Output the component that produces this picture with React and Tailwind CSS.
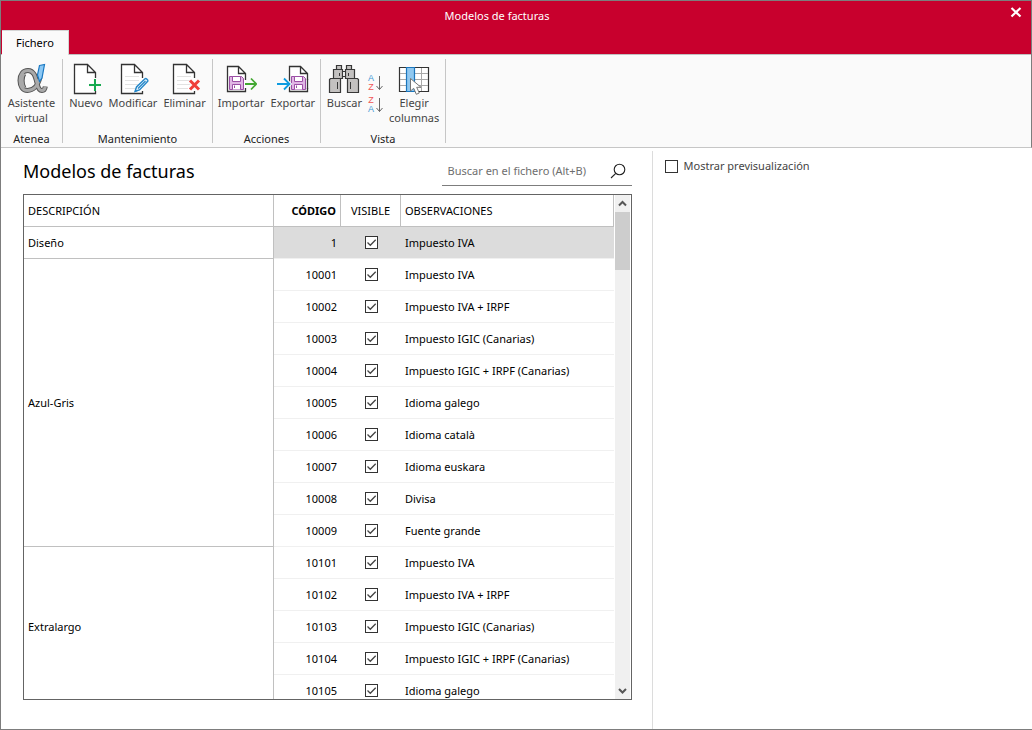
import React, { useState } from "react";

const GROUPS = [
  { name: "Diseño", rows: [["1", "Impuesto IVA"]] },
  {
    name: "Azul-Gris",
    rows: [
      ["10001", "Impuesto IVA"],
      ["10002", "Impuesto IVA + IRPF"],
      ["10003", "Impuesto IGIC (Canarias)"],
      ["10004", "Impuesto IGIC + IRPF (Canarias)"],
      ["10005", "Idioma galego"],
      ["10006", "Idioma català"],
      ["10007", "Idioma euskara"],
      ["10008", "Divisa"],
      ["10009", "Fuente grande"],
    ],
  },
  {
    name: "Extralargo",
    rows: [
      ["10101", "Impuesto IVA"],
      ["10102", "Impuesto IVA + IRPF"],
      ["10103", "Impuesto IGIC (Canarias)"],
      ["10104", "Impuesto IGIC + IRPF (Canarias)"],
      ["10105", "Idioma galego"],
    ],
  },
];

function Icon({ children, viewBox = "0 0 32 32" }) {
  return (
    <svg viewBox={viewBox} className="h-8 w-8 shrink-0" fill="none" aria-hidden="true">
      {children}
    </svg>
  );
}

function AlphaIcon() {
  const d = "M24 14C22 23 17 27.500 11.500 27.500C6.500 27.500 4 23 4 17.500C4 11.500 7 7.500 12 7.500C18 7.500 19.500 14 21 20C22 25 23.500 27.500 26 27.500C28 27.500 29 26 29.300 23.500";
  return (
    <Icon>
      <path d={d} stroke="#555" strokeWidth="5" />
      <path d="M8 10.500C5.500 14 5.500 21 8 25" stroke="#555" strokeWidth="5" />
      <path d={d} stroke="#a9a9a9" strokeWidth="3" />
      <path d="M8 10.500C5.500 14 5.500 21 8 25" stroke="#a9a9a9" strokeWidth="3" />
      <path d="M23.500 2.500L28.500 1.500L26 15L23.500 18.500L21.500 12Z" fill="#8cc8f4" stroke="#1a78c2" strokeWidth="1.200" />
    </Icon>
  );
}

function Page({ lines }) {
  return (
    <>
      <path d="M22.500 15V9.500L14.500 1.500H1.500V30.500H22.500V28" fill="#fff" />
      <path d="M22.500 15V9.500L14.500 1.500H1.500V30.500H22.500V28M14.500 1.500V9.500H22.500" stroke="#333" strokeWidth="1.300" />
      {lines && <path d="M5 13.500H19M5 17.500H19M5 21.500H18M5 25.500H16" stroke="#e2e2e2" />}
    </>
  );
}

function NewIcon() {
  return (
    <Icon viewBox="-3 0 32 32">
      <Page />
      <path d="M16 22H28M22 16V28" stroke="#fafafa" strokeWidth="4" />
      <path d="M16 22H28M22 16V28" stroke="#16a94f" strokeWidth="2" />
    </Icon>
  );
}

function EditIcon() {
  return (
    <Icon viewBox="-3 0 32 32">
      <Page lines />
      <path d="M15 28.500L16.500 24L25 15.800C26 15 28.500 17 27.700 18.300L19.500 27Z" fill="#e6f3fc" stroke="#2587c8" strokeWidth="1.400" />
      <path d="M18 25.500L25.500 18M15 28.500L17.500 27.500" stroke="#2587c8" strokeWidth="1.200" />
    </Icon>
  );
}

function DeleteIcon() {
  return (
    <Icon viewBox="-3 0 32 32">
      <Page lines />
      <path d="M18 17.500L27 26.500M27 17.500L18 26.500" stroke="#fafafa" strokeWidth="5" />
      <path d="M18 17.500L27 26.500M27 17.500L18 26.500" stroke="#ef3e3a" strokeWidth="3" />
    </Icon>
  );
}

function DiskPage() {
  return (
    <>
      <path d="M20.500 17V10.500L13.500 3.500H2.500V28.500H20.500V25" fill="#fff" />
      <path d="M20.500 17V10.500L13.500 3.500H2.500V28.500H20.500V25M13.500 3.500V10.500H20.500" stroke="#333" strokeWidth="1.300" />
      <path d="M4.500 13.500H16.500L18.500 15.500V26.500H4.500Z" fill="#e0b6e4" stroke="#9b4fa5" />
      <path d="M7.500 13.500H15.500V18.500H7.500Z" fill="#fff" stroke="#9b4fa5" />
      <path d="M7.500 26.500V21.500H15.500V26.500" fill="#fff" stroke="#9b4fa5" />
      <path d="M9.500 22.500V25" stroke="#9b4fa5" />
    </>
  );
}

function ImportIcon() {
  return (
    <Icon>
      <DiskPage />
      <path d="M20 21H31M26 15.500L31.300 21L26 26.500" stroke="#43a832" strokeWidth="1.800" />
    </Icon>
  );
}

function ExportIcon() {
  return (
    <Icon>
      <g transform="translate(10 0)">
        <DiskPage />
        <path d="M20.500 16V26" stroke="#333" strokeWidth="1.300" />
      </g>
      <path d="M0 21H12M7 15.500L12.500 21L7 26.500" stroke="#fafafa" strokeWidth="4" />
      <path d="M0 21H12.500M7 15.500L12.500 21L7 26.500" stroke="#0d9be0" strokeWidth="1.800" />
    </Icon>
  );
}

function BinocularsIcon() {
  return (
    <Icon>
      <g fill="#c3c1c0" stroke="#383838" strokeWidth="1.200">
        <path d="M13.500 8.500H18.500V13.500H13.500Z" fill="#fff" />
        <path d="M8.500 2.500H13.500V6.500H8.500ZM18.500 2.500H23.500V6.500H18.500Z" />
        <path d="M5.500 6.500H14.500V15.500H5.500ZM17.500 6.500H26.500V15.500H17.500Z" />
        <path d="M2.500 15.500H12.500V29.500H1.500V16.500ZM19.500 15.500H29.500L30.500 16.500V29.500H19.500Z" />
      </g>
      <path d="M9.500 19V26M22.500 19V26M11.500 10V13M20.500 10V13" stroke="#383838" />
    </Icon>
  );
}

function ColumnsIcon() {
  return (
    <Icon>
      <path d="M1.500 4.500H30.500V28.500H1.500Z" fill="#fff" stroke="#333" strokeWidth="1.200" />
      <path d="M2 10.500H30M2 16.500H30M2 22.500H30M23.500 5V28" stroke="#a9a9a9" />
      <path d="M8.500 4.500H16.500V28.500H8.500Z" fill="#90c8f0" stroke="#1b76bd" strokeWidth="1.200" />
      <path d="M12.500 15.500V28L15.700 25.300L18.300 31.300L21.300 30L18.700 24.300H23Z" fill="#fff" stroke="#777" />
    </Icon>
  );
}

function RibbonButton({ icon, children }) {
  return (
    <button type="button" className="flex flex-col items-center whitespace-nowrap text-center text-[11px] leading-[15px] text-[#444]">
      {icon}
      <span>{children}</span>
    </button>
  );
}

function RibbonGroup({ title, width, children }) {
  return (
    <section aria-label={title} className={`flex shrink-0 flex-col border-r border-[#c6c6c6] ${width}`}>
      <div className="flex flex-1 items-start justify-center gap-1.5 pt-1">{children}</div>
      <h2 className="mb-[-3px] text-center text-[11px] leading-[15px] text-[#222]">{title}</h2>
    </section>
  );
}

function SortButton({ letters, label }) {
  return (
    <button type="button" aria-label={label} className="flex items-center gap-0.5">
      <span className="flex flex-col font-['Liberation_Sans',sans-serif] text-[9px] leading-[9px]">
        {letters.map((l) => (
          <span key={l} className={l === "A" ? "text-[#3f97d4]" : "text-[#f05555]"}>
            {l}
          </span>
        ))}
      </span>
      <svg viewBox="0 0 7 16" className="h-4 w-[7px]" fill="none" stroke="#666" aria-hidden="true">
        <path d="M3.500 1V14.500M.5 11L3.500 14.500L6.500 11" />
      </svg>
    </button>
  );
}

function VisibleBox({ code }) {
  return (
    <label className="relative mx-auto block h-[13px] w-[13px]">
      <input
        type="checkbox"
        defaultChecked
        aria-label={`Visible ${code}`}
        className="peer block h-[13px] w-[13px] appearance-none border border-[#333] bg-white"
      />
      <svg viewBox="0 0 13 13" className="pointer-events-none invisible absolute inset-0 peer-checked:visible" fill="none" stroke="#444" strokeWidth="1.300" aria-hidden="true">
        <path d="M2.500 6.500L5.300 9.300L10.700 3.700" />
      </svg>
    </label>
  );
}

function ModelsTable() {
  const head = "h-8 border-b border-r border-[#c0c0c0] font-normal";
  return (
    <table className="w-full table-fixed border-separate border-spacing-0 text-[11px] leading-4 text-black">
      <colgroup>
        <col className="w-[250px]" />
        <col className="w-[67px]" />
        <col className="w-[60px]" />
        <col />
      </colgroup>
      <thead>
        <tr>
          <th scope="col" className={`${head} pl-1 text-left`}>DESCRIPCIÓN</th>
          <th scope="col" className="h-8 border-b border-r border-[#c0c0c0] pr-1 text-right font-bold">CÓDIGO</th>
          <th scope="col" className={head}>VISIBLE</th>
          <th scope="col" className={`${head} pl-1 text-left`}>OBSERVACIONES</th>
        </tr>
      </thead>
      {GROUPS.map((g) => (
        <tbody key={g.name}>
          {g.rows.map(([code, note], i) => {
            const cell =
              code === "1" ? "h-8 border-b border-[#f0f0f0] bg-[#dcdcdc]" : "h-8 border-b border-[#f0f0f0]";
            return (
              <tr key={code}>
                {i === 0 && (
                  <th
                    scope="rowgroup"
                    rowSpan={g.rows.length}
                    className="border-b border-r border-[#c0c0c0] pl-1 text-left align-middle font-normal"
                  >
                    {g.name}
                  </th>
                )}
                <td className={`${cell} pr-1 text-right`}>{code}</td>
                <td className={cell}>
                  <VisibleBox code={code} />
                </td>
                <td className={`${cell} pl-1`}>{note}</td>
              </tr>
            );
          })}
        </tbody>
      ))}
    </table>
  );
}

function Chevron({ d }) {
  return (
    <svg viewBox="0 0 15 17" className="h-[17px] w-[15px] shrink-0" fill="none" stroke="#555" strokeWidth="2" aria-hidden="true">
      <path d={d} />
    </svg>
  );
}

export default function App() {
  const [preview, setPreview] = useState(false);
  return (
    <div className="flex h-screen flex-col border-b border-l border-t border-[#7d7d7d] bg-white font-['Noto_Sans',sans-serif]">
      <header className="border-r border-[#7d7d7d] bg-[#c8002d]">
        <div className="flex h-[29px] items-center">
          <h1 className="flex-1 pr-2 text-center text-[11px] leading-4 text-white">Modelos de facturas</h1>
          <button type="button" aria-label="Cerrar" className="flex h-[22px] w-[30px] items-center justify-center self-start">
            <svg viewBox="0 0 12 12" className="h-3 w-3" stroke="#fff" strokeWidth="2.200" aria-hidden="true">
              <path d="M1.500 2L10.500 10.500M10.500 2L1.500 10.500" />
            </svg>
          </button>
        </div>
        <nav className="flex border-b border-[#c0c0c0] pl-px">
          <button type="button" className="-mb-px h-[25px] border-r border-t border-[#d5d5d5] bg-[#fafafa] px-[14px] text-[11px] leading-4 text-black">
            Fichero
          </button>
        </nav>
      </header>

      <div className="flex h-[93px] shrink-0 border-b border-r border-b-[#c6c6c6] border-r-[#7d7d7d] bg-[#fafafa] py-1">
        <RibbonGroup title="Atenea" width="w-[62px]">
          <RibbonButton icon={<AlphaIcon />}>Asistente<br />virtual</RibbonButton>
        </RibbonGroup>
        <RibbonGroup title="Mantenimiento" width="w-[150px]">
          <RibbonButton icon={<NewIcon />}>Nuevo</RibbonButton>
          <RibbonButton icon={<EditIcon />}>Modificar</RibbonButton>
          <RibbonButton icon={<DeleteIcon />}>Eliminar</RibbonButton>
        </RibbonGroup>
        <RibbonGroup title="Acciones" width="w-[108px]">
          <RibbonButton icon={<ImportIcon />}>Importar</RibbonButton>
          <RibbonButton icon={<ExportIcon />}>Exportar</RibbonButton>
        </RibbonGroup>
        <RibbonGroup title="Vista" width="w-[125px]">
          <RibbonButton icon={<BinocularsIcon />}>Buscar</RibbonButton>
          <div className="flex flex-col gap-1 pt-[11px]">
            <SortButton letters={["A", "Z"]} label="Orden ascendente" />
            <SortButton letters={["Z", "A"]} label="Orden descendente" />
          </div>
          <RibbonButton icon={<ColumnsIcon />}>Elegir<br />columnas</RibbonButton>
        </RibbonGroup>
      </div>

      <div className="flex min-h-0 flex-1 pt-[3px]">
        <main className="flex w-[63.200%] flex-col border-r border-[#dcdcdc] pb-[29px] pl-[22px] pr-5">
          <div className="flex items-center justify-between">
            <h2 className="text-[18px] leading-10 text-black">Modelos de facturas</h2>
            <div className="flex h-[30px] w-[190px] items-center border-b border-[#7d7d7d] pl-1.5 pr-1.5">
              <input
                type="search"
                aria-label="Buscar en el fichero"
                placeholder="Buscar en el fichero (Alt+B)"
                className="min-w-0 flex-1 bg-transparent text-[11px] leading-4 outline-none placeholder:text-[#6e6e6e]"
              />
              <button type="button" aria-label="Buscar">
                <svg viewBox="0 0 16 16" className="h-4 w-4" fill="none" stroke="#222" strokeWidth="1.100" aria-hidden="true">
                  <circle cx="9.500" cy="6.500" r="5.300" />
                  <path d="M5.800 10.300L1 15" />
                </svg>
              </button>
            </div>
          </div>
          <div className="mt-[3px] flex min-h-0 flex-1 border border-[#646464]">
            <div className="min-w-0 flex-1 overflow-hidden">
              <ModelsTable />
            </div>
            <div className="mx-px flex w-[15px] shrink-0 flex-col bg-[#f0f0f0]">
              <Chevron d="M4 10.500L7.500 7L11 10.500" />
              <div className="h-[58px] bg-[#cdcdcd]" />
              <div className="flex-1" />
              <Chevron d="M4 7L7.500 10.500L11 7" />
            </div>
          </div>
        </main>
        <aside className="flex-1 px-3 pt-[7px]">
          <label className="flex items-center gap-1.5 text-[11px] leading-4 text-[#444]">
            <input
              type="checkbox"
              checked={preview}
              onChange={(e) => setPreview(e.target.checked)}
              className="h-[13px] w-[13px] appearance-none border border-[#333] bg-white checked:bg-[#333]"
            />
            Mostrar previsualización
          </label>
        </aside>
      </div>
    </div>
  );
}
